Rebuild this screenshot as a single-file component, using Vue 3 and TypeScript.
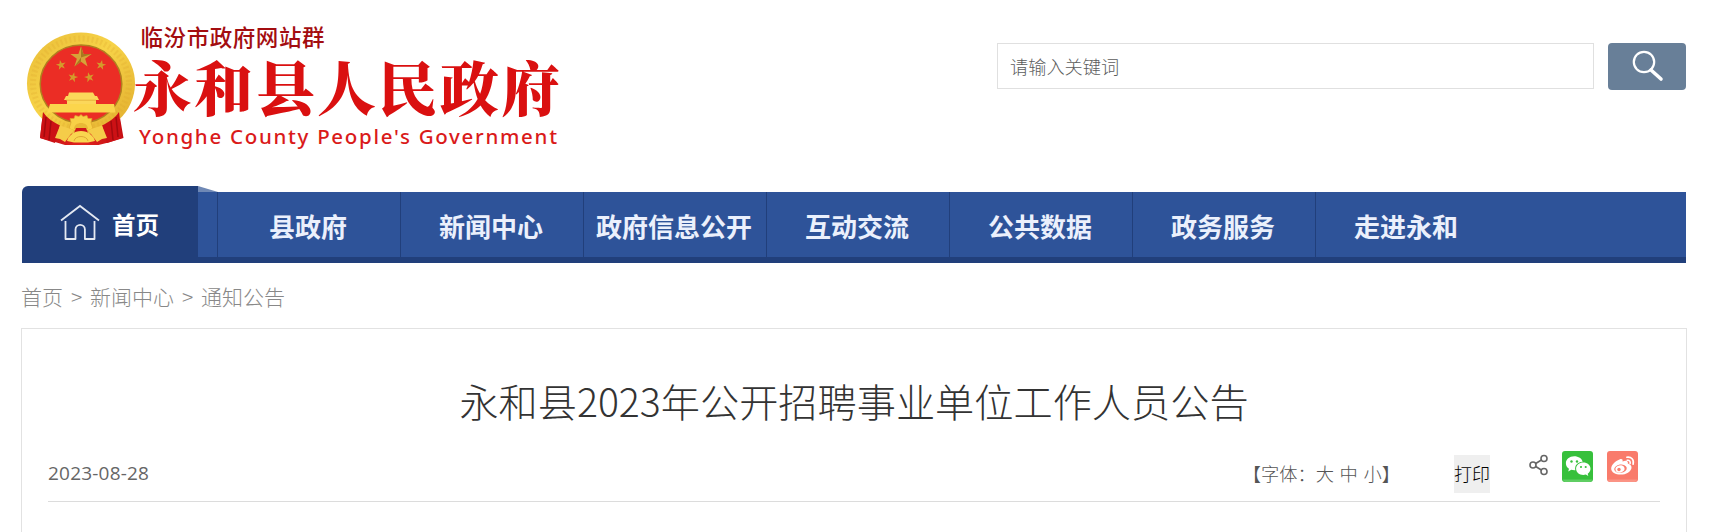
<script setup lang="ts">
import { ref } from "vue";

interface NavItem {
  id: string;
  label: string;
}

const keyword = ref("");

const navItems: NavItem[] = [
  { id: "gov", label: "县政府" },
  { id: "news", label: "新闻中心" },
  { id: "open", label: "政府信息公开" },
  { id: "interact", label: "互动交流" },
  { id: "data", label: "公共数据" },
  { id: "service", label: "政务服务" },
  { id: "about", label: "走进永和" },
];

const crumbs = ["首页", "新闻中心", "通知公告"];

const star = "M0,-10 L2.3,-3.1 9.5,-3.1 3.7,1.2 5.9,8.1 0,3.8 -5.9,8.1 -3.7,1.2 -9.5,-3.1 -2.3,-3.1Z";

// 四颗小星的位置
const smallStars = [
  { x: 61, y: 65, r: -12 },
  { x: 101, y: 65, r: 12 },
  { x: 73, y: 77.3, r: 14 },
  { x: 89.3, y: 77.3, r: -14 },
];

const doSearch = () => {
  keyword.value = keyword.value.trim();
};

const doPrint = () => window.print();
</script>

<template>
  <div class="page">
    <header class="header">
      <svg class="logo" viewBox="22 20 546 140" width="546" height="140">
        <defs>
          <linearGradient id="gold" x1="0" y1="0" x2="1" y2="1">
            <stop offset="0" stop-color="#e9bd38" />
            <stop offset="0.45" stop-color="#f7d348" />
            <stop offset="1" stop-color="#e0ab2c" />
          </linearGradient>
          <linearGradient id="drape" x1="0" y1="0" x2="1" y2="0">
            <stop offset="0" stop-color="#c30d12" />
            <stop offset="0.5" stop-color="#e02420" />
            <stop offset="1" stop-color="#c30d12" />
          </linearGradient>
        </defs>
        <path d="M43,112L60,124h42l17,-12 4.500,26-15,4.500-10,2.500H65l-10,-3-15,-4z" fill="url(#drape)" />
        <ellipse cx="81" cy="83.500" rx="54" ry="51" fill="url(#gold)" />
        <ellipse
          cx="81" cy="83.500" rx="48" ry="45" fill="none" stroke="#d9a02a"
          stroke-width="6" stroke-dasharray="2 2.500" opacity="0.22"
        />
        <ellipse cx="81" cy="84" rx="40.800" ry="39" fill="#eb2d25" stroke="#b07f1f" stroke-width="1.500" />
        <path :d="star" transform="translate(81 57.5) scale(1.12)" fill="#d6a338" />
        <path d="M81,46.5 L81,57.5 91.5,54 83.5,54Z M81,57.5 L74.5,66.5 81,61.7Z" fill="#a8781f" />
        <path
          v-for="s in smallStars" :key="s.x" :d="star"
          :transform="`translate(${s.x} ${s.y}) rotate(${s.r}) scale(0.52)`"
          fill="#d39b2b"
        />
        <path d="M69,92.500h24l2,3.500h2l2,4h-3v4H67v-4h-3l2,-4h2z" fill="#fbd75a" />
        <path d="M50,104h64l1.500,8.500H47.500z" fill="#fbd54c" />
        <path d="M66,100.200h30" stroke="#e2a936" stroke-width="0.800" />
        <!-- 两侧绶带 -->
        <path d="M43,112c4,6 10,10 17,13.500l-5,17.500-15,-5z" fill="#cc1115" />
        <path d="M119,112c-4,6-10,10-17,13.500l5,17.500 15,-5z" fill="#cc1115" />
        <path
          d="M46,117l-2,20M51,121l-2,19M116,117l2,20M111,121l2,19"
          stroke="#a30a0e" stroke-width="1.500"
        />
        <!-- 齿轮与麦穗结 -->
        <path
          d="M69,128.500l2,-6-1,-4 4,0 1,-3 4,1 2,-2 2,2 4,-1 1,3 4,0-1,4 2,6-5,2H74z"
          fill="#f8d146" stroke="#dba32b" stroke-width="0.700"
        />
        <path d="M74,129c0,-8 14,-8 14,0" fill="#e9b936" />
        <path d="M60,125.500l14,4.500-9,12-5,-3-5,-1z" fill="#f5cc49" />
        <path d="M102,125.500l-14,4.500 9,12 5,-3 5,-1z" fill="#f5cc49" />
        <path d="M76,128h10l2,5h-14z" fill="#cf1819" />
        <path d="M67,141c1,-5 7,-10 14,-10s13,5 14,10l-7,1.500H74z" fill="#f9d64f" />
        <path d="M74,141c1,-6 13,-6 14,0" fill="none" stroke="#dfa834" stroke-width="1" />
        <text class="logo-group" x="140.5" y="45.500" textLength="184">临汾市政府网站群</text>
        <text class="logo-name" x="133" y="111" textLength="427">永和县人民政府</text>
        <text class="logo-en" x="139" y="143.500" textLength="418">Yonghe County People's Government</text>
      </svg>
      <form class="search" @submit.prevent="doSearch">
        <input v-model="keyword" class="search-input" type="text" placeholder="请输入关键词" />
        <button class="search-btn" type="submit" aria-label="搜索">
          <svg width="78" height="47" viewBox="0 0 78 47" fill="none" stroke="#fff">
            <circle cx="36" cy="19" r="10.2" stroke-width="2.2" />
            <path d="M43 27L53 36" stroke-width="3.6" stroke-linecap="round" />
          </svg>
        </button>
      </form>
    </header>

    <nav class="nav">
      <a class="nav-home">
        <svg width="40" height="37" viewBox="0 0 40 37" fill="none" stroke="#e4e9f2" stroke-width="1.8">
          <path d="M1 16.500L20 2 39 16.500" />
          <path d="M5.500 17V35H15.500V25.500a4.700 4.700 0 0 1 9.400 0V35H34.500V17" stroke-linejoin="round" />
        </svg>
        <span>首页</span>
      </a>
      <svg class="nav-fold" width="20" height="6" viewBox="0 0 20 6">
        <path d="M0 0L20 6H0z" fill="#6f88b5" />
      </svg>
      <div class="nav-bar">
        <a v-for="item in navItems" :key="item.id" class="nav-item">{{ item.label }}</a>
      </div>
    </nav>

    <div class="crumbs">
      <template v-for="(c, i) in crumbs" :key="c">
        <span v-if="i > 0" class="crumb-sep">&gt;</span>
        <a>{{ c }}</a>
      </template>
    </div>

    <main class="article">
      <h1 class="title">永和县2023年公开招聘事业单位工作人员公告</h1>
      <div class="meta">
        <span class="date">2023-08-28</span>
        <span class="font-size">【字体：<a>大</a> <a>中</a> <a>小</a>】</span>
        <button class="print" type="button" @click="doPrint">打印</button>
        <div class="share">
          <svg width="20" height="22" viewBox="0 0 20 22" fill="none" stroke="#666" stroke-width="1.6">
            <circle cx="4" cy="11" r="3" />
            <circle cx="15" cy="4.5" r="3" />
            <circle cx="15" cy="17.5" r="3" />
            <path d="M6.7 9.5L12.4 6M6.7 12.5L12.4 16" />
          </svg>
          <svg class="wechat" width="31" height="31" viewBox="0 0 31 31">
            <rect width="31" height="31" rx="3" fill="#37c03c" />
            <path d="M1 28.5h29a3 3 0 0 1-2 2.5H3a3 3 0 0 1-2-2.5z" fill="#5fce63" />
            <path d="M12.2 5.2c-4.700 0-8.300 3-8.300 7 0 2.300 1.200 4.200 3.100 5.500l-.8 2.700 3.100-1.600c1.200.4 2.900.5 4 .4-1-5 3-8.600 7.400-8.400-.8-3.400-4.200-5.600-8.500-5.600z" fill="#fff" />
            <path d="M21.300 11.600c-4 0-7.200 2.700-7.200 6.200s3.200 6.200 7.200 6.200c.8 0 1.700-.2 2.500-.4l2.500 1.400-.6-2.300c1.700-1.200 2.800-2.900 2.800-4.900 0-3.500-3.200-6.200-7.200-6.200z" fill="#fff" />
            <g fill="#37c03c">
              <circle cx="9.500" cy="10.500" r="1.200" />
              <circle cx="15" cy="10.500" r="1.200" />
              <circle cx="19" cy="16" r="1.050" />
              <circle cx="23.700" cy="16" r="1.050" />
            </g>
          </svg>
          <svg width="31" height="31" viewBox="0 0 31 31">
            <rect width="31" height="31" rx="3" fill="#f97b6b" />
            <path d="M1 28.500h29a3 3 0 0 1-2 2.500H3a3 3 0 0 1-2-2.500z" fill="#fb9485" />
            <path d="M12.500 8.500c2-.9 3.700-.3 3 2.100 3-1.300 6-1.100 5.300 1.900 2.600.7 4 2.200 3.700 4.400-.5 3.700-5.500 6.700-10.800 6.700-5.200 0-9.500-2.300-9.500-6.200 0-3.300 4.200-7.400 8.300-8.900z" fill="#fff" />
            <ellipse cx="13.500" cy="17.700" rx="6.300" ry="4.200" fill="#f97b6b" transform="rotate(-8 13.500 17.700)" />
            <ellipse cx="13" cy="18" rx="4.600" ry="3.500" fill="#fff" transform="rotate(-15 13 18)" />
            <circle cx="12" cy="18.500" r="1.700" fill="#f97b6b" />
            <path d="M19.800 6.200c4.600-.7 7.500 2.700 6.300 7M20.200 9.300c2.200-.3 3.400 1.200 2.900 3.200" fill="none" stroke="#fff" stroke-width="1.600" stroke-linecap="round" />
          </svg>
        </div>
      </div>
    </main>
  </div>
</template>

<style>
body {
  margin: 0;
  background: #fff;
}
</style>

<style scoped>
.page {
  box-sizing: border-box;
  width: 1736px;
  height: 532px;
  padding: 20px 49px 0 21px;
  display: flex;
  flex-direction: column;
  overflow: hidden;
  font-family: "Noto Sans CJK SC", sans-serif;
}

.header {
  display: flex;
  justify-content: space-between;
  height: 166px;
  padding: 0 1px;
}

.logo {
  flex: none;
}

.logo-group {
  font-size: 22.5px;
  font-weight: 500;
  fill: #a30d10;
}

.logo-name {
  font-family: "Noto Serif CJK SC", "Noto Sans CJK SC", serif;
  font-size: 59px;
  font-weight: 900;
  fill: #da1010;
}

.logo-en {
  font-family: "Noto Sans", "Open Sans", sans-serif;
  font-size: 20.5px;
  font-weight: 500;
  fill: #da1a1a;
}

.search {
  display: flex;
  gap: 14px;
  padding-top: 23px;
}

.search-input {
  box-sizing: border-box;
  width: 597px;
  height: 46px;
  padding: 0 12px;
  border: 1px solid #e0e0e0;
  outline: none;
  font-family: inherit;
  font-size: 18.2px;
  font-weight: 300;
}

.search-input::placeholder {
  color: #5c5c5c;
}

.search-btn {
  width: 78px;
  height: 47px;
  padding: 0;
  border: none;
  border-radius: 4px;
  background: #687f98;
}

.search-btn svg {
  display: block;
}

.nav {
  display: flex;
  flex: none;
  height: 77px;
  margin: 0 1px;
  position: relative;
}

.nav-home {
  display: flex;
  align-items: center;
  box-sizing: border-box;
  width: 176px;
  padding: 0 0 4px 38px;
  gap: 12px;
  border-top-left-radius: 6px;
  background: #213f7b;
  color: #fff;
  font-size: 23.5px;
  font-weight: 700;
}

.nav-home span {
  padding-top: 2px;
}

.nav-fold {
  position: absolute;
  left: 176px;
  top: 0;
}

.nav-bar {
  display: flex;
  flex: 1;
  box-sizing: border-box;
  margin-top: 6px;
  padding-left: 19px;
  border-bottom: 6px solid #213f7b;
  background: #2e5399;
}

.nav-item {
  box-sizing: border-box;
  width: 183px;
  padding-right: 2px;
  border-left: 1px solid #213f7b;
  color: #ebf0fc;
  font-size: 26px;
  font-weight: 700;
  line-height: 67px;
  text-align: center;
  white-space: nowrap;
}

.crumbs {
  display: flex;
  flex: none;
  height: 65px;
  color: #888;
  font-size: 21px;
  font-weight: 300;
  line-height: 66px;
}

.crumb-sep {
  width: 27px;
  text-align: center;
}

.article {
  flex: 1;
  padding: 0 26px;
  border: 1px solid #e2e2e2;
  border-bottom: none;
}

.title {
  height: 110px;
  margin: 0;
  padding-top: 5px;
  color: #333;
  font-size: 39.2px;
  font-weight: 300;
  line-height: 132px;
  text-align: center;
  box-sizing: border-box;
  white-space: nowrap;
}

.meta {
  display: flex;
  align-items: flex-start;
  height: 62px;
  border-bottom: 1px solid #dcdcdc;
  color: #555;
  font-size: 18.3px;
  font-weight: 300;
}

.date {
  margin-right: auto;
  color: #666;
  font-family: "Open Sans", sans-serif;
  font-size: 19px;
  font-weight: 400;
  letter-spacing: 0.2px;
  line-height: 69px;
}

.font-size {
  line-height: 68px;
  margin-right: 54px;
  word-spacing: 1.5px;
}

.print {
  width: 36px;
  height: 38px;
  margin-top: 16px;
  padding: 0 0 3px;
  border: none;
  background: #efefef;
  color: #000;
  font-family: inherit;
  font-size: 18px;
  font-weight: 300;
  white-space: nowrap;
}

.share {
  display: flex;
  align-items: flex-start;
  padding: 12px 22px 0 39px;
}

.share svg:first-child {
  margin-top: 3px;
}

.wechat {
  margin: 0 14px 0 13px;
}
</style>
